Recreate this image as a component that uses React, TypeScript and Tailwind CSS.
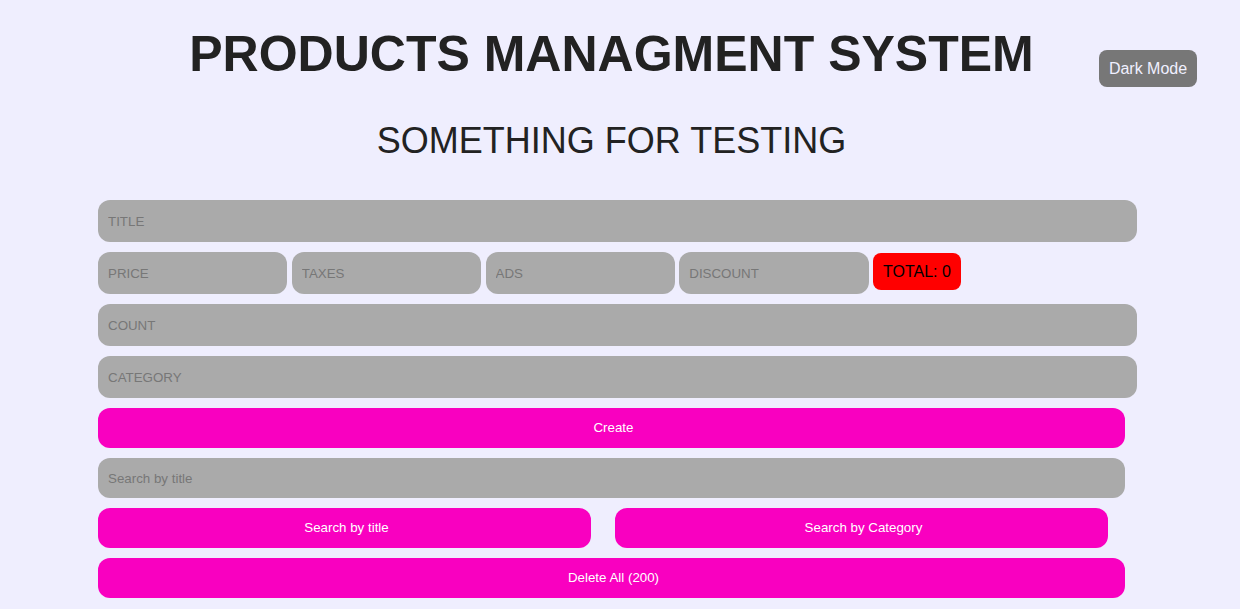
const fieldCls =
  "rounded-[12px] bg-[#aaaaaa] px-[10px] text-[13.33px] text-[#333] outline-none placeholder:text-[#777777]";
const btnCls =
  "h-[40px] rounded-[12px] bg-[#f900c0] pl-[4px] text-[13.33px] text-white";

export default function App() {
  return (
    <div className="relative min-h-[609px] bg-[#efeefe] font-['Liberation_Sans',Arial,sans-serif] text-[#222]">
      <button className="absolute right-[43px] top-[50px] h-[37px] w-[98px] rounded-[8px] bg-[#777777] text-[16px] text-[#f0f0ff]">
        Dark Mode
      </button>

      <div className="pr-[17px] pt-[27px] text-center">
        <h1 className="text-[50px] font-bold leading-[55px]">
          PRODUCTS MANAGMENT SYSTEM
        </h1>
        <h2 className="mt-[38px] text-[36px] leading-[41px]">
          SOMETHING FOR TESTING
        </h2>
      </div>

      <div className="ml-[98px] mt-[39px] flex w-[1039px] flex-col gap-[10px]">
        <input className={`${fieldCls} h-[42px]`} placeholder="TITLE" />
        <div className="flex gap-[4.5px]">
          <input className={`${fieldCls} h-[42px] w-[189.25px]`} placeholder="PRICE" />
          <input className={`${fieldCls} h-[42px] w-[189.25px]`} placeholder="TAXES" />
          <input className={`${fieldCls} h-[42px] w-[189.25px]`} placeholder="ADS" />
          <input className={`${fieldCls} h-[42px] w-[189.25px]`} placeholder="DISCOUNT" />
          <div className="mt-[1px] flex h-[37px] w-[88px] items-center rounded-[8px] bg-[#ff0000] pl-[10px] text-[16px] text-black">
            TOTAL: 0
          </div>
        </div>
        <input className={`${fieldCls} h-[42px]`} placeholder="COUNT" />
        <input className={`${fieldCls} h-[42px]`} placeholder="CATEGORY" />
        <button className={`${btnCls} w-[1027px]`}>Create</button>
        <input
          className={`${fieldCls} h-[40px] w-[1027px]`}
          placeholder="Search by title"
        />
        <div className="flex gap-[24px]">
          <button className={`${btnCls} w-[493px]`}>Search by title</button>
          <button className={`${btnCls} w-[493px]`}>Search by Category</button>
        </div>
        <button className={`${btnCls} w-[1027px]`}>Delete All (200)</button>
      </div>
    </div>
  );
}
